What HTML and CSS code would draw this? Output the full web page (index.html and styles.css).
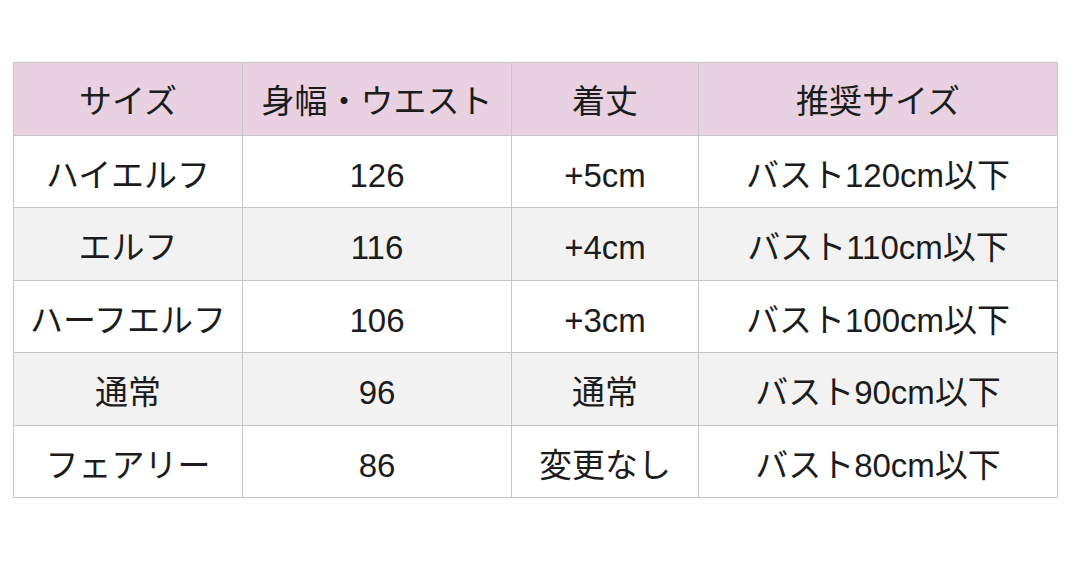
FILE: index.html
```html
<!DOCTYPE html>
<html lang="ja">
<head>
<meta charset="utf-8">
<title>サイズ表</title>
<link rel="stylesheet" href="styles.css">
</head>
<body>
<div class="sheet">
  <div class="cell head">サイズ</div>
  <div class="cell head">身幅・ウエスト</div>
  <div class="cell head">着丈</div>
  <div class="cell head">推奨サイズ</div>

  <div class="cell">ハイエルフ</div>
  <div class="cell">126</div>
  <div class="cell">+5cm</div>
  <div class="cell">バスト120cm以下</div>

  <div class="cell alt">エルフ</div>
  <div class="cell alt">116</div>
  <div class="cell alt">+4cm</div>
  <div class="cell alt">バスト110cm以下</div>

  <div class="cell">ハーフエルフ</div>
  <div class="cell">106</div>
  <div class="cell">+3cm</div>
  <div class="cell">バスト100cm以下</div>

  <div class="cell alt">通常</div>
  <div class="cell alt">96</div>
  <div class="cell alt">通常</div>
  <div class="cell alt">バスト90cm以下</div>

  <div class="cell">フェアリー</div>
  <div class="cell">86</div>
  <div class="cell">変更なし</div>
  <div class="cell">バスト80cm以下</div>
</div>
</body>
</html>
```
FILE: styles.css
```css
html, body {
  margin: 0;
  padding: 0;
  background: #ffffff;
}

body {
  font-family: "Liberation Sans", "Noto Sans CJK JP", sans-serif;
  color: #1c1c1c;
}

.sheet {
  display: grid;
  grid-template-columns: 228px 268px 186px 358px;
  grid-template-rows: repeat(6, 71.5px);
  gap: 1px;
  width: max-content;
  margin: 62px 0 0 13px;
  background: #c6c6c6;
  border: 1px solid #c6c6c6;
}

.cell {
  display: flex;
  align-items: center;
  justify-content: center;
  padding-top: 8px;
  box-sizing: border-box;
  background: #ffffff;
  font-size: 33px;
  line-height: 1;
  white-space: nowrap;
}

.cell.alt {
  background: #f2f2f2;
}

.cell.head {
  background: #e8d2e1;
  padding-top: 5px;
}
```
